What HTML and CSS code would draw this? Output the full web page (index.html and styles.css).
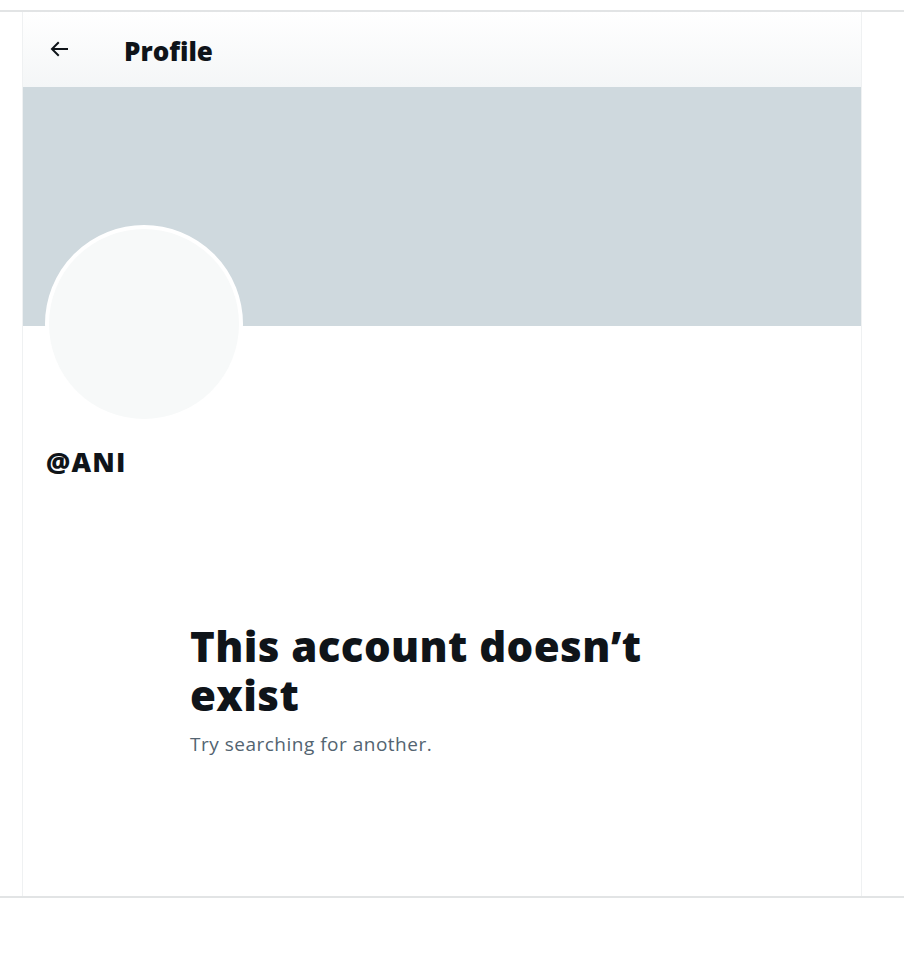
FILE: index.html
```html
<!DOCTYPE html>
<html>
<head>
<meta charset="utf-8">
<link rel="stylesheet" href="styles.css">
</head>
<body>
<div class="frame">
  <main class="column">
    <header class="topbar">
      <svg class="back" viewBox="0 0 24 24" width="24" height="24"><path d="M7.414 13l5.043 5.04-1.414 1.42L3.586 12l7.457-7.46 1.414 1.42L7.414 11H21v2H7.414z" fill="#0f1419"/></svg>
      <h2 class="title">Profile</h2>
    </header>
    <div class="banner"></div>
    <div class="avatar"></div>
    <div class="handle">@ANI</div>
    <section class="empty">
      <h1 class="empty-title">This account doesn’t exist</h1>
      <p class="empty-sub">Try searching for another.</p>
    </section>
  </main>
</div>
</body>
</html>
```
FILE: styles.css
```css
html, body {
  margin: 0;
  padding: 0;
  background: #ffffff;
}
body {
  font-family: "Open Sans", "Liberation Sans", sans-serif;
  color: #0f1419;
}
.frame {
  margin-top: 10px;
  border-top: 2px solid #e2e4e5;
  border-bottom: 2px solid #e2e4e5;
  height: 884px;
}
.column {
  margin-left: 22px;
  width: 838px;
  height: 100%;
  border-left: 1px solid #eff1f2;
  border-right: 1px solid #eff1f2;
  display: flex;
  flex-direction: column;
}
.topbar {
  height: 75px;
  display: flex;
  align-items: center;
  padding-left: 24px;
  background: linear-gradient(#ffffff, #f4f6f7);
  box-sizing: border-box;
}
.back {
  display: block;
  margin-top: -1px;
}
.title {
  margin: 3px 0 0 53px;
  font-family: "Open Sans", sans-serif;
  font-weight: 800;
  font-size: 26px;
  line-height: 30px;
}
.banner {
  height: 239px;
  background: #cfd9de;
}
.avatar {
  width: 190px;
  height: 190px;
  margin: -101px 0 0 22px;
  border: 4px solid #ffffff;
  border-radius: 50%;
  background: #f7f9f9;
}
.handle {
  margin: 23px 0 0 23px;
  font-family: "Open Sans", sans-serif;
  font-weight: 800;
  font-size: 27px;
  line-height: 32px;
  letter-spacing: 1.2px;
}
.empty {
  margin: 143px 0 0 167px;
  width: 500px;
}
.empty-title {
  margin: 0;
  font-family: "Open Sans", sans-serif;
  font-weight: 800;
  font-size: 42px;
  line-height: 49px;
  letter-spacing: 0.4px;
}
.empty-sub {
  margin: 13px 0 0;
  font-family: "Open Sans", sans-serif;
  font-weight: 400;
  font-size: 19px;
  line-height: 24px;
  letter-spacing: 0.5px;
  color: #536471;
}
```
